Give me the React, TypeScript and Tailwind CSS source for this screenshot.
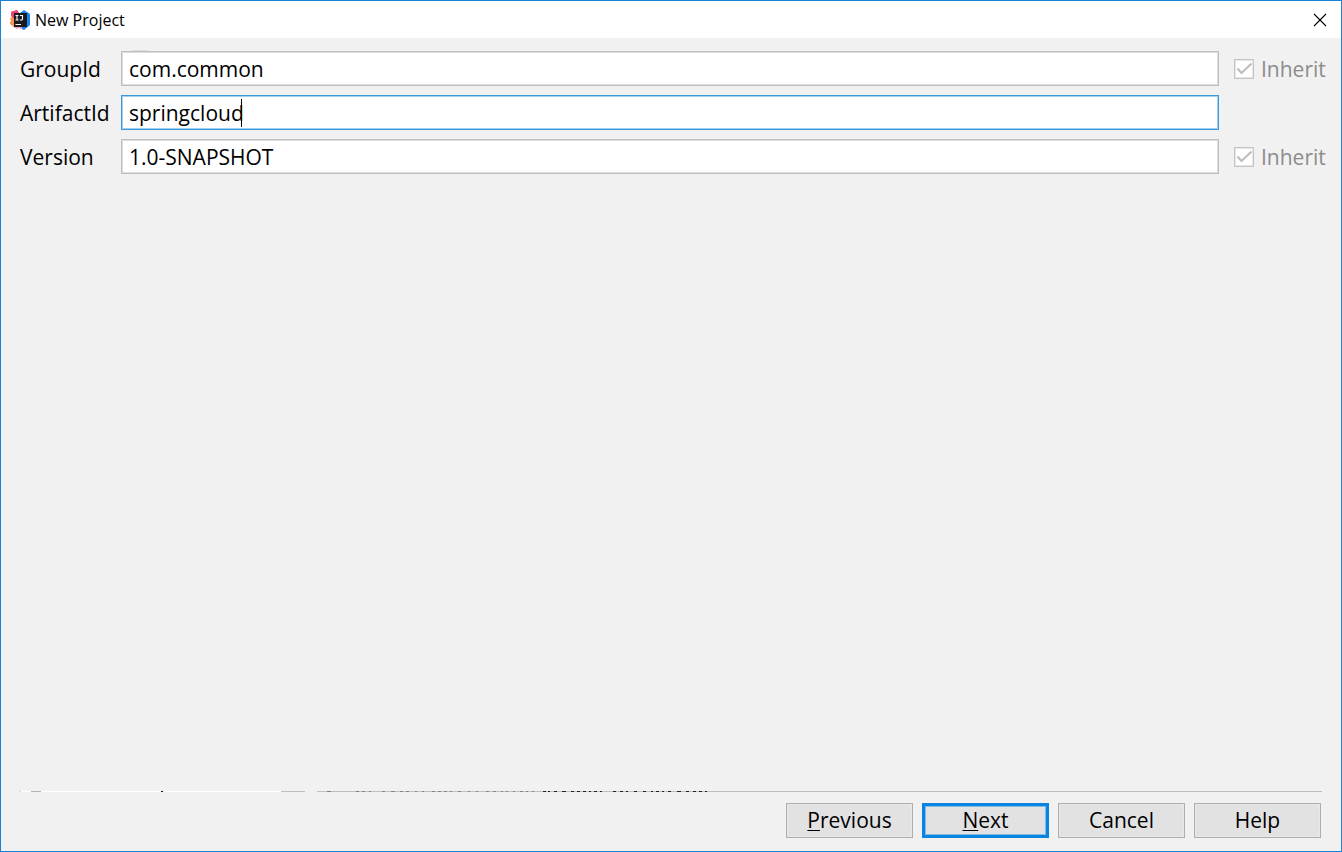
import { useState } from "react";

interface Field {
  id: string;
  label: string;
  value: string;
  inherit: boolean;
}

const initialFields: Field[] = [
  { id: "groupId", label: "GroupId", value: "com.common", inherit: true },
  { id: "artifactId", label: "ArtifactId", value: "springcloud", inherit: false },
  { id: "version", label: "Version", value: "1.0-SNAPSHOT", inherit: true },
];

const buttons = [
  { label: "Previous", mnemonic: true },
  { label: "Next", mnemonic: true, primary: true },
  { label: "Cancel" },
  { label: "Help" },
];

function AppLogo() {
  return (
    <svg className="w-5 h-5" viewBox="0 0 20 20" aria-hidden="true">
      <path d="M1 2 L7 0 L10 4 L8 13 L4 17 L0 13 L2 9 Z" fill="#f04a6a" />
      <path d="M0 8 L6 7 L9 13 L5 18 L0 14 L1 11 Z" fill="#fb9350" />
      <path d="M1 2 L7 0 L9 4 L5 9 L1 6 Z" fill="#ee4273" />
      <path d="M10 3 L14 0 L20 4 V15 L14 20 L8 17 Z" fill="#1684f2" />
      <path d="M4 16 L11 16 L13 20 L9 18 L6 19 Z" fill="#e9a0c4" />
      <rect x="4" y="3" width="13" height="14" fill="#1a1a1c" />
      <path d="M5.5 5.5 H8.5 M7 5.5 V10 M5.5 10 H8.5 M10 5.5 H12.5 V9 Q12.5 10 11.3 10 H9.8" stroke="#fff" strokeWidth="1.1" fill="none" />
      <path d="M5.5 14.5 H11" stroke="#fff" strokeWidth="1" />
    </svg>
  );
}

function TitleBar() {
  return (
    <header className="flex items-center justify-between h-[37px] pl-[9px] pr-[14px] bg-white">
      <div className="flex items-center gap-[5px]">
        <AppLogo />
        <h1 className="text-[16px] leading-5">New Project</h1>
      </div>
      <button type="button" aria-label="Close">
        <svg className="w-[14px] h-[14px]" viewBox="0 0 14 14" aria-hidden="true">
          <path d="M1 1 L13 13 M13 1 L1 13" stroke="#000" strokeWidth="1.1" fill="none" />
        </svg>
      </button>
    </header>
  );
}

function InheritBox({ id }: { id: string }) {
  return (
    <div className="flex items-center gap-[7px]">
      <span className="relative w-5 h-5">
        <input
          id={id}
          type="checkbox"
          checked
          disabled
          readOnly
          className="block appearance-none w-5 h-5 bg-white border border-[#c4c4c4] shadow-[inset_0_0_0_1px_#e6e6e6]"
        />
        <svg className="absolute inset-0 w-5 h-5 pointer-events-none" viewBox="0 0 20 20" aria-hidden="true">
          <path d="M3.5 9.5 L7.5 14 L17.5 4.5" stroke="#bcbcbc" strokeWidth="2" fill="none" />
        </svg>
      </span>
      <label htmlFor={id} className="text-[#8c8c8c]">Inherit</label>
    </div>
  );
}

function Separator() {
  return (
    <div className="relative flex h-px mx-[19px]" role="separator">
      <span className="w-px bg-[#bfbfbf]" />
      <span className="w-[260px] bg-white" />
      <span className="w-6 bg-[#bfbfbf]" />
      <span className="w-3" />
      <span className="flex-1 bg-[#bfbfbf]" />
      <svg className="absolute left-0 top-0 w-[700px] h-px" viewBox="0 0 700 1" aria-hidden="true">
        <path d="M11 .5 h10" stroke="#a9b4bc" />
        <path d="M141 .5 h2" stroke="#111" />
        <path d="M307 .5 h4 M336 .5 h3" stroke="#808080" />
        <path
          d="M342 .5 h3 m4 0 h2 m11 0 h3 m6 0 h4 m5 0 h3 m3 0 h3 m6 0 h2 m5 0 h2 m8 0 h3 m3 0 h3 m3 0 h3 m3 0 h2 m6 0 h3 m7 0 h2 m6 0 h2 m8 0 h3 m4 0 h3 m5 0 h2 m3 0 h2 m5 0 h2 m5 0 h3 m3 0 h2 m4 0 h2"
          stroke="#858585"
        />
        <path
          d="M523 .5 h3 m2 0 h2 m4 0 h3 m5 0 h4 m5 0 h3 m3 0 h3 m3 0 h3 m3 0 h2 m3 0 h3 m3 0 h2 m11 0 h3 m4 0 h3 m3 0 h2 m6 0 h3 m6 0 h3 m5 0 h2 m3 0 h3 m3 0 h2 m4 0 h3 m6 0 h4 m5 0 h3 m4 0 h3 m3 0 h3 m3 0 h2"
          stroke="#222"
        />
      </svg>
    </div>
  );
}

export default function App() {
  const [fields, setFields] = useState(initialFields);
  const active = "artifactId";

  const update = (id: string, value: string) => {
    setFields(fields.map((f) => (f.id === id ? { ...f, value } : f)));
  };

  return (
    <div className="flex flex-col min-h-screen bg-[#f1f1f1] border border-[#1883d7] text-black text-[21px] leading-7 font-['Open_Sans','Noto_Sans',sans-serif]">
      <TitleBar />
      <main className="relative flex-1 px-[19px] pt-[13px]">
        <div className="absolute left-[131px] top-3 w-4 h-px bg-[#dcdcdc]" />
        <form className="grid grid-cols-[86px_1fr_88px] gap-x-[15px] gap-y-[9px]">
          {fields.map((field) => (
            <div key={field.id} className="contents">
              <label htmlFor={field.id} className="self-center whitespace-nowrap">
                {field.label}
              </label>
              <div className="relative">
                <input
                  id={field.id}
                  type="text"
                  value={field.value}
                  onChange={(e) => update(field.id, e.target.value)}
                  className={
                    field.id === active
                      ? "block w-full h-[35px] px-[7px] bg-white border border-[#3b99dc] shadow-[inset_0_0_0_1px_#a3d0f1] outline-none"
                      : "block w-full h-[35px] px-[7px] bg-white border border-[#bfbfbf] shadow-[inset_0_0_0_1px_#dedede] outline-none"
                  }
                />
                {field.id === active && (
                  <span className="absolute left-[120px] top-1 w-px h-7 bg-black" />
                )}
              </div>
              {field.inherit ? <InheritBox id={`${field.id}-inherit`} /> : <span />}
            </div>
          ))}
        </form>
      </main>
      <footer>
        <Separator />
        <div className="flex justify-end gap-[9px] pt-[11px] pr-5 pb-[13px]">
          {buttons.map((b) => (
            <button
              key={b.label}
              type="button"
              className={
                b.primary
                  ? "w-[127px] h-[35px] pb-[2px] bg-[#e2e2e2] border-3 border-[#0a84e0] shadow-[inset_0_0_0_1px_#7dbbeb]"
                  : "w-[127px] h-[35px] pb-[2px] bg-[#e2e2e2] border border-[#adadad] shadow-[inset_0_0_0_1px_#e9e9e9]"
              }
            >
              {b.mnemonic ? (
                <>
                  <span className="underline underline-offset-2 decoration-1">{b.label[0]}</span>
                  {b.label.slice(1)}
                </>
              ) : (
                b.label
              )}
            </button>
          ))}
        </div>
      </footer>
    </div>
  );
}
